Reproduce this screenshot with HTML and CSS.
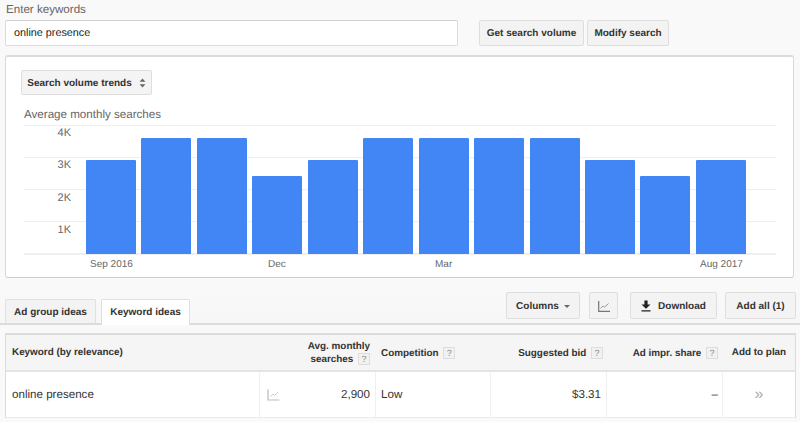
FILE: index.html
```html
<!DOCTYPE html>
<html lang="en">
<head>
<meta charset="utf-8">
<title>Keyword Planner</title>
<link rel="stylesheet" href="styles.css">
</head>
<body>
<div class="label">Enter keywords</div>
<div class="search-row">
  <div class="input">online presence</div>
  <button class="btn btn-volume">Get search volume</button>
  <button class="btn btn-modify">Modify search</button>
</div>
<section class="card">
  <button class="btn btn-select">Search volume trends
    <svg class="updown" width="7" height="10" viewBox="0 0 8 12"><path d="M4 0.5 7.5 4.5H0.5ZM4 11.5 0.5 7.5H7.5Z" fill="#666"/></svg>
  </button>
  <div class="chart-title">Average monthly searches</div>
  <div class="chart">
    <div class="grid"><i></i><i></i><i></i><i></i><i class="base"></i></div>
    <div class="ylabels"><span>4K</span><span>3K</span><span>2K</span><span>1K</span></div>
    <div class="bars">
      <b class="h3"></b><b class="h4"></b><b class="h4"></b><b class="h2"></b><b class="h3"></b><b class="h4"></b><b class="h4"></b><b class="h4"></b><b class="h4"></b><b class="h3"></b><b class="h2"></b><b class="h3"></b>
    </div>
  </div>
  <div class="xlabels"><span>Sep 2016</span><span>Dec</span><span>Mar</span><span>Aug 2017</span></div>
</section>
<div class="tabbar">
  <div class="tab tab-off">Ad group ideas</div>
  <div class="tab tab-on">Keyword ideas</div>
  <div class="tools">
    <button class="btn tool-columns">Columns <span class="caret"></span></button>
    <button class="btn tool-chart"><svg width="12" height="11" viewBox="0 0 12 11"><path d="M0.7 0V10.3H12" fill="none" stroke="#777" stroke-width="1.2"/><path d="M2.5 7.5 5 5 6.5 6.2 10.5 2.5" fill="none" stroke="#999" stroke-width="1"/></svg></button>
    <button class="btn tool-download"><svg width="10" height="12" viewBox="0 0 10 12"><path d="M3.4 0.5H6.6V4.5H9.5L5 8.8 0.5 4.5H3.4ZM0.5 10.3H9.5V11.6H0.5Z" fill="#222"/></svg>Download</button>
    <button class="btn tool-add">Add all (1)</button>
  </div>
</div>
<div class="table">
  <div class="row head">
    <div class="cell c-key">Keyword (by relevance)</div>
    <div class="cell c-avg right">Avg. monthly<br>searches <span class="q">?</span></div>
    <div class="cell c-comp">Competition <span class="q">?</span></div>
    <div class="cell c-bid right">Suggested bid <span class="q">?</span></div>
    <div class="cell c-share right">Ad impr. share <span class="q">?</span></div>
    <div class="cell c-add center">Add to plan</div>
  </div>
  <div class="row body-row">
    <div class="cell c-key">online presence</div>
    <div class="cell c-spark"><svg width="13" height="12" viewBox="0 0 13 12"><path d="M1 0.5V11H12.5" fill="none" stroke="#bbb" stroke-width="1.2"/><path d="M3.5 7.5 6 5 7.5 6.5 11 3" fill="none" stroke="#ccc" stroke-width="1"/></svg></div>
    <div class="cell c-num right">2,900</div>
    <div class="cell c-comp">Low</div>
    <div class="cell c-bid right">$3.31</div>
    <div class="cell c-share right">–</div>
    <div class="cell c-add center chev">»</div>
  </div>
</div>
</body>
</html>
```
FILE: styles.css
```css
* { box-sizing: border-box; }
html, body { margin: 0; padding: 0; }
body {
  width: 800px; height: 422px; overflow: hidden;
  background: #f9f9f9;
  font-family: "Liberation Sans", Arial, sans-serif;
  font-size: 11.6px; color: #333;
  text-rendering: geometricPrecision;
}
.label { height: 20px; padding: 3px 0 0 6px; line-height: 14px; color: #666; }
.search-row { display: flex; height: 26px; padding-left: 5px; }
.input {
  width: 453px; height: 26px; background: #fff;
  border: 1px solid #dcdcdc; border-top-color: #cfcfcf; border-radius: 2px;
  padding-left: 8px; line-height: 24px; font-size: 10.8px; color: #222;
}
.btn {
  display: flex; align-items: center; justify-content: center;
  height: 26px; padding: 1px 0 0; margin: 0;
  font: bold 10px "Liberation Sans", Arial, sans-serif; color: #333;
  text-rendering: geometricPrecision;
  background: #f3f3f3; border: 1px solid #dedede; border-radius: 2px;
}
.btn-volume { width: 105px; margin-left: 21px; }
.btn-modify { width: 82px; margin-left: 3px; }
.card {
  width: 789px; height: 223px; margin: 9px 0 0 5px; padding: 13px 0 0 15px;
  background: #fff; border: 1px solid #d8d8d8; border-top: 2px solid #dcdcdc; border-radius: 3px;
  border-bottom-color: #ccc;
}
.btn-select { width: 131px; height: 25px; background: #f4f4f4; }
.updown { margin-left: 7px; }
.chart-title { margin: 13px 0 0 3px; font-size: 11.6px; line-height: 14px; color: #666; height: 17px; }
.chart { position: relative; width: 752px; height: 130px; margin: 0 0 0 3px; }
.grid { position: absolute; inset: 0; display: flex; flex-direction: column; justify-content: space-between; }
.grid i { display: block; height: 1px; background: #efefef; }
.grid .base { height: 2px; background: #efefef; }
.ylabels {
  position: absolute; left: 0; top: 1px; width: 47px;
  display: flex; flex-direction: column; align-items: flex-end; gap: 18.4px;
  font-size: 11px; line-height: 14px; color: #666;
}
.bars {
  position: absolute; left: 62px; right: 0; top: 0; bottom: 1px;
  display: flex; align-items: flex-end; gap: 5.45px;
}
.bars b { display: block; width: 50px; background: #4285f4; border-radius: 1px 1px 0 0; }
.h2 { height: 78px; }
.h3 { height: 94px; }
.h4 { height: 116px; }
.xlabels { position: relative; width: 752px; height: 16px; margin-left: 3px; font-size: 10px; line-height: 16px; color: #666; }
.xlabels span { position: absolute; top: 2px; }
.xlabels span:nth-child(1) { left: 66px; }
.xlabels span:nth-child(2) { left: 244px; }
.xlabels span:nth-child(3) { left: 411px; }
.xlabels span:nth-child(4) { left: 676px; }
.tabbar {
  position: relative; display: flex; align-items: flex-end; height: 47px;
  border-bottom: 2px solid #dcdcdc; padding-left: 5px;
  background: linear-gradient(#f9f9f9, #f7f7f7);
}
.tab {
  font-weight: bold; font-size: 10px; color: #333; padding-top: 2px;
  display: flex; align-items: center; justify-content: center;
  border: 1px solid #e0e0e0; border-bottom: 0; border-radius: 2px 2px 0 0;
}
.tab-off { width: 91px; height: 24px; background: #f3f3f3; }
.tab-on { width: 89px; height: 26px; margin: 0 0 -2px 5px; background: #fff; z-index: 1; padding-top: 0; }
.tools { position: absolute; left: 506px; top: 14px; display: flex; }
.tools .btn { height: 27px; padding-top: 2px; }
.tool-columns { width: 74px; }
.tool-chart { width: 29px; margin-left: 9px; }
.tools .tool-chart { padding-top: 1px; }
.tools .tool-download { padding-top: 1px; }
.tool-download { width: 87px; margin-left: 12px; gap: 7px; }
.tool-add { width: 71px; margin-left: 8px; }
.caret { display: inline-block; margin-left: 5px; border: 3.5px solid transparent; border-top: 3.5px solid #666; border-bottom: 0; }
.table { width: 791px; margin: 8px 0 0 5px; border: 1px solid #dcdcdc; border-top-width: 2px; border-bottom: 0; background: #fff; }
.row { display: grid; grid-template-columns: 254px 116px 115px 116px 116px 1fr; }
.head { height: 37px; padding-top: 1px; background: #f5f5f5; border-bottom: 2px solid #e4e4e4; font-weight: bold; font-size: 9.9px; color: #333; }
.body-row { grid-template-columns: 254px 34px 82px 115px 116px 116px 1fr; height: 46px; border-bottom: 1px solid #ebebeb; font-size: 11.6px; color: #333; }
.cell { display: flex; align-items: center; padding: 0 6px; }
.head .cell { display: block; align-self: center; line-height: 12px; }
.head .c-comp { padding-left: 5px; }
.head .c-bid { padding-right: 4px; }
.head .c-share { padding-right: 5px; }
.head .c-add { padding: 0; }
.body-row .cell { border-right: 1px solid #f0f0f0; }
.body-row .c-comp { padding-left: 5px; }
.body-row .c-num, .body-row .c-bid { padding-right: 5px; }
.body-row .c-share { padding-right: 4px; }
.body-row .c-spark { padding-left: 7px; border-right: 0; }
.body-row .c-add { border-right: 0; }
.right { justify-content: flex-end; text-align: right; }
.center { justify-content: center; text-align: center; }
.q {
  display: inline-block; width: 12px; height: 12px; line-height: 11px; text-align: center;
  font-size: 9px; font-weight: normal; color: #888; background: #f1f1f1; border: 1px solid #ddd;
  margin-left: 2px;
}
.chev { color: #aaa; font-size: 16px; }
```
